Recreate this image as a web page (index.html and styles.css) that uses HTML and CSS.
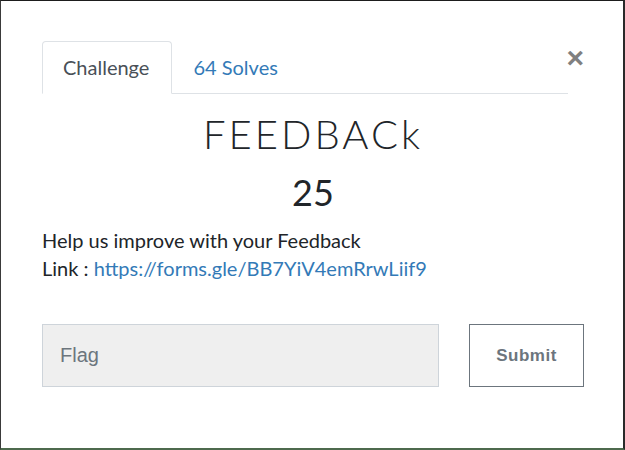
FILE: index.html
```html
<!DOCTYPE html>
<html>
<head>
<meta charset="utf-8">
<link rel="stylesheet" href="styles.css">
</head>
<body>
<div class="frame">
  <div class="modal">
    <div class="head">
      <ul class="tabs">
        <li class="tab active">Challenge</li>
        <li class="tab link">64 Solves</li>
      </ul>
      <span class="close">×</span>
    </div>
    <h2 class="name">FEEDBACk</h2>
    <h3 class="value">25</h3>
    <div class="desc">
      <p>Help us improve with your Feedback</p>
      <p>Link : <a href="#">https://forms.gle/BB7YiV4emRrwLiif9</a></p>
    </div>
    <div class="submit-row">
      <input class="flag" type="text" placeholder="Flag">
      <button class="submit">Submit</button>
    </div>
  </div>
</div>
</body>
</html>
```
FILE: styles.css
```css
html, body {
  margin: 0;
  padding: 0;
  background: #1d1d1d;
}
.frame {
  width: 625px;
  height: 450px;
  box-sizing: border-box;
  border-top: 1px solid #1d1d1d;
  border-left: 1px solid #3a3a3a;
  border-right: 2px solid #2a2a2a;
  border-bottom: 2px solid #4d6a4d;
}
.modal {
  background: #fff;
  height: 100%;
  box-sizing: border-box;
  padding: 40px 39px 0 41px;
  font-family: Lato, "Open Sans", sans-serif;
  color: #212529;
}
.head {
  display: flex;
  align-items: flex-start;
}
.tabs {
  flex: 1;
  display: flex;
  list-style: none;
  margin: 0;
  padding: 0;
  border-bottom: 1px solid #dee2e6;
}
.tab {
  font-size: 20px;
  line-height: 27px;
  padding: 12px 20px;
  border: 1px solid transparent;
  border-top-left-radius: 4px;
  border-top-right-radius: 4px;
  margin-bottom: -1px;
}
.tab.active {
  color: #495057;
  padding-right: 22px;
  border-color: #dee2e6 #dee2e6 #fff;
  background: #fff;
}
.tab.link {
  color: #337ab7;
}
.close {
  width: 16px;
  display: flex;
  justify-content: flex-end;
  font-family: "Liberation Sans", Arial, sans-serif;
  font-weight: bold;
  font-size: 30px;
  line-height: 30px;
  margin-top: 2px;
  margin-right: 0;
  color: #808080;
}
.name {
  margin: 0;
  padding-top: 16px;
  text-align: center;
  font-family: Lato, sans-serif;
  font-weight: 300;
  font-size: 40px;
  line-height: 48px;
  letter-spacing: 3px;
  color: #212529;
}
.value {
  margin: 13px 0 0;
  text-align: center;
  font-weight: 400;
  font-size: 36px;
  line-height: 43px;
}
.desc {
  margin-top: 12px;
  font-size: 20px;
  line-height: 28px;
}
.desc p {
  margin: 0;
}
.desc a {
  color: #337ab7;
  text-decoration: none;
}
.submit-row {
  display: flex;
  gap: 30px;
  margin-top: 42px;
}
.flag {
  width: 397px;
  height: 63px;
  box-sizing: border-box;
  background: #efefef;
  border: 1px solid #ced4da;
  padding: 0 17px;
  font-family: "Liberation Sans", Arial, sans-serif;
  font-size: 20px;
  color: #495057;
  outline: none;
}
.flag::placeholder {
  color: #6c757d;
}
.submit {
  width: 115px;
  height: 63px;
  box-sizing: border-box;
  background: #fff;
  border: 1px solid #6c757d;
  font-family: "Liberation Sans", Arial, sans-serif;
  font-weight: bold;
  font-size: 17px;
  letter-spacing: 0.5px;
  color: #6c757d;
}
```
